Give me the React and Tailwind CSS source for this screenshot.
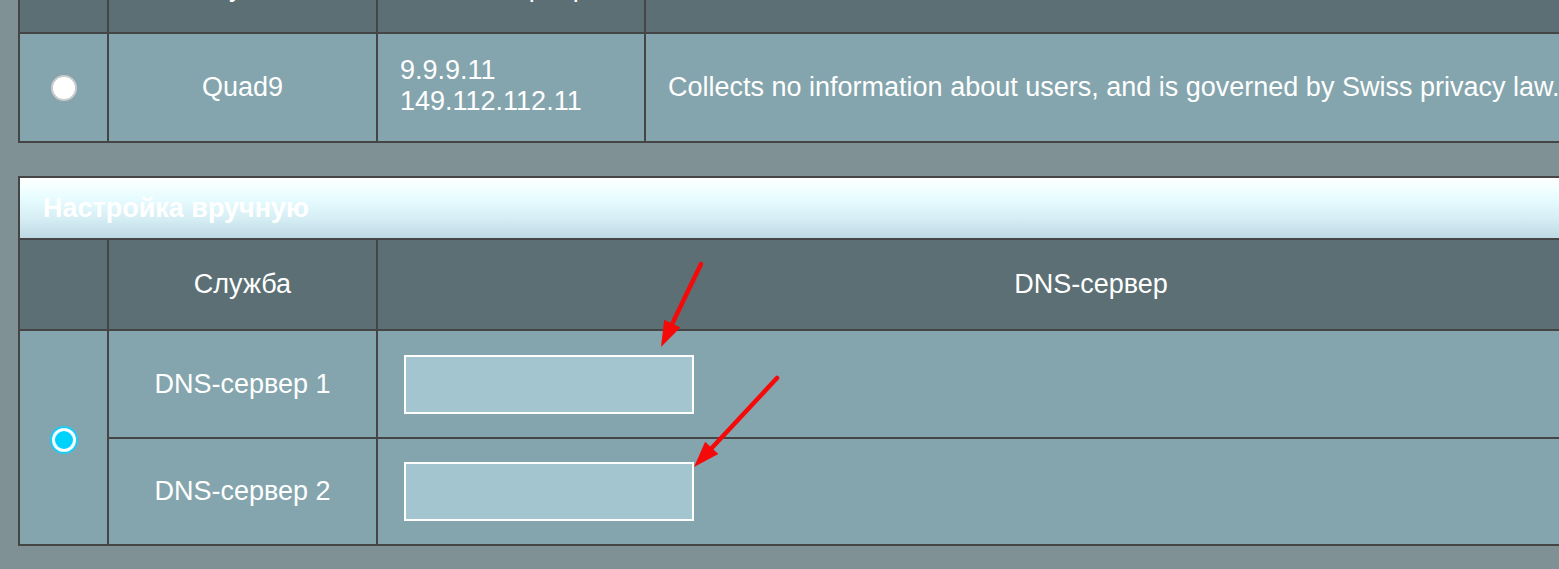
import React from 'react';

const font = { fontFamily: '"Liberation Sans", Arial, sans-serif' };

function Radio({ checked }) {
  if (checked) {
    return (
      <div className="w-[28px] h-[28px] rounded-full bg-[#18cdf8] p-[2px]">
        <div className="w-full h-full rounded-full bg-white p-[3px]">
          <div className="w-full h-full rounded-full bg-[#00d2fb]"></div>
        </div>
      </div>
    );
  }
  return <div className="w-[26px] h-[26px] rounded-full bg-white border-2 border-[#c9cccd]"></div>;
}

function DnsInput() {
  return (
    <input
      type="text"
      className="w-[290px] h-[59px] bg-[#a2c5d0] border-2 border-white outline-none"
    />
  );
}

function Arrow({ x1, y1, x2, y2 }) {
  // line with an arrowhead at (x2, y2)
  const dx = x2 - x1;
  const dy = y2 - y1;
  const len = Math.sqrt(dx * dx + dy * dy);
  const ux = dx / len;
  const uy = dy / len;
  const head = 26;
  const half = 9;
  const bx = x2 - ux * head;
  const by = y2 - uy * head;
  const p1 = `${bx - uy * half},${by + ux * half}`;
  const p2 = `${bx + uy * half},${by - ux * half}`;
  return (
    <g>
      <line x1={x1} y1={y1} x2={bx + ux * 4} y2={by + uy * 4} stroke="#f50a0a" strokeWidth="4.5" strokeLinecap="round" />
      <polygon points={`${x2},${y2} ${p1} ${p2}`} fill="#f50a0a" />
    </g>
  );
}

export default function App() {
  return (
    <div className="relative h-[569px] w-full overflow-hidden bg-[#7f9195] text-white" style={font}>
      <div className="pl-[18px] -mt-[59px]">
        {/* Quad9 table */}
        <div className="w-[1788px] border-2 border-[#454545]">
          <div className="flex h-[91px] border-b-2 border-[#454545] bg-[#5b6f74] text-[27px]">
            <div className="w-[89px] border-r-2 border-[#454545]"></div>
            <div className="w-[269px] border-r-2 border-[#454545] flex items-center justify-center">Служба</div>
            <div className="w-[268px] border-r-2 border-[#454545] flex items-center justify-center">DNS-сервер</div>
            <div className="flex-1 flex items-center justify-center">Описание</div>
          </div>
          <div className="flex h-[107px] bg-[#84a5ad] text-[27px]">
            <div className="w-[89px] border-r-2 border-[#454545] flex items-center justify-center">
              <Radio />
            </div>
            <div className="w-[269px] border-r-2 border-[#454545] flex items-center justify-center">Quad9</div>
            <div className="w-[268px] border-r-2 border-[#454545] flex flex-col justify-center pl-[22px] pb-[4px] leading-[31px]">
              <span>9.9.9.11</span>
              <span>149.112.112.11</span>
            </div>
            <div className="flex-1 flex items-center pl-[22px] whitespace-nowrap">
              Collects no information about users, and is governed by Swiss privacy law.
            </div>
          </div>
        </div>

        {/* Manual setup */}
        <div className="mt-[33px] w-[1788px] border-2 border-[#454545]">
          <div className="h-[62px] border-b-2 border-[#454545] bg-[linear-gradient(to_bottom,#ffffff_0%,#f4ffff_15%,#e6fcff_35%,#d4ecf3_70%,#bfd9e4_100%)] flex items-center pl-[23px]">
            <span className="text-[27px] font-bold text-white">Настройка вручную</span>
          </div>
          <div className="flex h-[91px] border-b-2 border-[#454545] bg-[#5b6f74] text-[27px]">
            <div className="w-[89px] border-r-2 border-[#454545]"></div>
            <div className="w-[269px] border-r-2 border-[#454545] flex items-center justify-center">Служба</div>
            <div className="flex-1 flex items-center justify-center">DNS-сервер</div>
          </div>
          <div className="flex bg-[#84a5ad] text-[27px]">
            <div className="w-[89px] border-r-2 border-[#454545] flex items-center justify-center pt-[5px]">
              <Radio checked />
            </div>
            <div className="flex-1 flex flex-col">
              <div className="flex h-[108px] border-b-2 border-[#454545]">
                <div className="w-[269px] border-r-2 border-[#454545] flex items-center justify-center">DNS-сервер 1</div>
                <div className="flex-1 flex items-center pl-[26px]">
                  <DnsInput />
                </div>
              </div>
              <div className="flex h-[105px]">
                <div className="w-[269px] border-r-2 border-[#454545] flex items-center justify-center">DNS-сервер 2</div>
                <div className="flex-1 flex items-center pl-[26px]">
                  <DnsInput />
                </div>
              </div>
            </div>
          </div>
        </div>
      </div>

      {/* annotation arrows */}
      <svg className="absolute inset-0 pointer-events-none" width="1559" height="569">
        <Arrow x1={701} y1={264} x2={661} y2={347} />
        <Arrow x1={777} y1={378} x2={694} y2={467} />
      </svg>
    </div>
  );
}
